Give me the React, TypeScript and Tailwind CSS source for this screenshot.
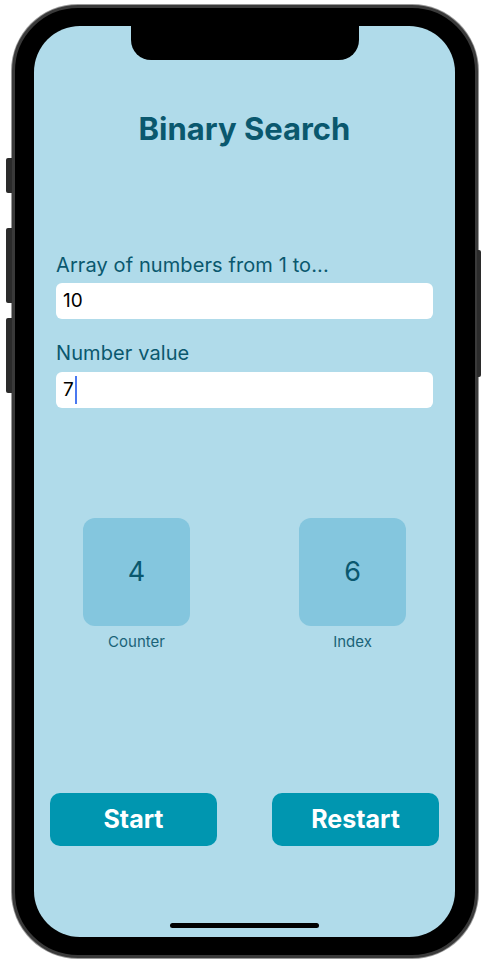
import React from 'react';

export default function App() {
  const stats = [
    { value: '4', label: 'Counter' },
    { value: '6', label: 'Index' },
  ];

  return (
    <div className="w-[489px] h-[967px] bg-white pt-[5px] pl-[12px] font-['Inter','Noto_Sans',sans-serif]">
      {/* phone frame */}
      <div className="relative w-[466px] h-[953px] rounded-[66px] border-[3px] border-[#3a3a3a] bg-black pt-[18px] pl-[19px] shadow-[0_0_0_1px_#9a9a9a]">
        {/* side buttons */}
        <div className="absolute left-[-9px] top-[150px] w-[6px] h-[35px] rounded-l-[2px] bg-[#2b2b2b]"></div>
        <div className="absolute left-[-9px] top-[220px] w-[6px] h-[75px] rounded-l-[2px] bg-[#2b2b2b]"></div>
        <div className="absolute left-[-9px] top-[310px] w-[6px] h-[75px] rounded-l-[2px] bg-[#2b2b2b]"></div>
        <div className="absolute right-[-6px] top-[242px] w-[4px] h-[127px] rounded-r-[2px] bg-[#2b2b2b]"></div>

        {/* screen */}
        <div className="relative w-[421px] h-[911px] rounded-[46px] bg-[#b0dbea] overflow-hidden flex flex-col">
          {/* notch */}
          <div className="absolute top-0 left-1/2 -translate-x-1/2 w-[228px] h-[34px] bg-black rounded-b-[20px]"></div>

          <h1 className="mt-[85px] text-center text-[31px] leading-[36px] font-bold text-[#0a586e]">
            Binary Search
          </h1>

          <div className="px-[22px] flex flex-col">
            <label className="mt-[106px] text-[20px] leading-[24px] tracking-[0.1px] text-[#0a586e]">
              Array of numbers from 1 to...
            </label>
            <div className="mt-[6px] h-[36px] rounded-[6px] bg-white px-[7px] flex items-center text-[19px] text-black">
              10
            </div>

            <label className="mt-[22px] text-[20px] leading-[24px] tracking-[0.1px] text-[#0a586e]">
              Number value
            </label>
            <div className="mt-[7px] h-[36px] rounded-[6px] bg-white px-[7px] flex items-center text-[19px] text-black">
              7
              <span className="ml-[1px] w-[2px] h-[28px] bg-[#4a78f0]"></span>
            </div>
          </div>

          <div className="mt-[110px] px-[49px] flex justify-between">
            {stats.map((s) => (
              <div key={s.label} className="flex flex-col items-center">
                <div className="w-[107px] h-[108px] rounded-[12px] bg-[#84c6de] flex items-center justify-center text-[27px] text-[#0a586e]">
                  {s.value}
                </div>
                <span className="mt-[6px] text-[15px] leading-[20px] text-[#1a6378]">{s.label}</span>
              </div>
            ))}
          </div>

          <div className="mt-[141px] px-[16px] flex justify-between">
            <button className="w-[167px] h-[53px] rounded-[10px] bg-[#0096b0] text-white text-[25px] font-bold">
              Start
            </button>
            <button className="w-[167px] h-[53px] rounded-[10px] bg-[#0096b0] text-white text-[25px] font-bold">
              Restart
            </button>
          </div>

          {/* home indicator */}
          <div className="mt-auto mb-[9px] self-center w-[149px] h-[5px] rounded-full bg-black"></div>
        </div>
      </div>
    </div>
  );
}
